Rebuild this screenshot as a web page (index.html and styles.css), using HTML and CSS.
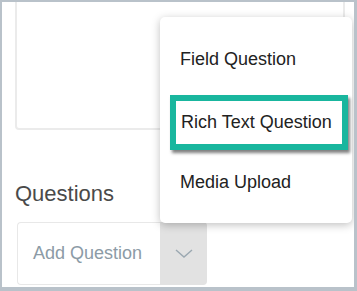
FILE: index.html
```html
<!DOCTYPE html>
<html lang="en">
<head>
    <meta charset="UTF-8">
    <title>Add Question</title>
    <link rel="stylesheet" href="styles.css">
</head>
<body>

    <div class="panel">
        <div class="text-area"></div>

        <h3 class="section-label">Questions</h3>

        <div class="add-group">
            <div class="add-input">Add Question</div>
            <div class="add-toggle">
                <svg width="18" height="10" viewBox="0 0 18 10">
                    <polyline points="1,1 9,8 17,1" fill="none" stroke="#9ba8b1" stroke-width="1.4"/>
                </svg>
            </div>
        </div>

        <ul class="menu">
            <li class="menu-item">Field Question</li>
            <li class="menu-item active">Rich Text Question</li>
            <li class="menu-item">Media Upload</li>
        </ul>
    </div>

</body>
</html>
```

FILE: styles.css
```css
* {
    margin: 0;
    padding: 0;
    box-sizing: border-box;
    font-family: 'Liberation Sans', Arial, sans-serif;
}
body {
    background: #b9c2ca;
    padding: 2px 3px 4px 2px;
}
.panel {
    position: relative;
    width: 352px;
    height: 285px;
    background: white;
    overflow: hidden;
    padding-left: 13px;
}
.text-area {
    width: 330px;
    height: 138px;
    margin-top: -10px;
    border: 2px solid #ebebeb;
    border-radius: 4px;
}
.section-label {
    font-size: 22px;
    font-weight: 400;
    line-height: 26px;
    color: #4a4a4a;
    margin-top: 50.5px;
}
.add-group {
    display: flex;
    height: 63px;
    margin-top: 15.5px;
    margin-left: 2px;
}
.add-input {
    width: 143px;
    display: flex;
    align-items: center;
    padding-left: 15px;
    font-size: 18px;
    color: #8c9ba6;
    border: 1px solid #e8e8e8;
    border-right: none;
    border-radius: 4px 0 0 4px;
}
.add-toggle {
    width: 47px;
    display: flex;
    align-items: center;
    justify-content: center;
    background: #e2e2e2;
    border-radius: 0 4px 4px 0;
}
.menu {
    position: absolute;
    left: 158px;
    top: 15px;
    width: 192px;
    height: 206px;
    list-style: none;
    background: white;
    border-radius: 5px;
    box-shadow: 0 2px 9px rgba(0, 0, 0, 0.25);
    padding: 12px 0 10px;
}
.menu-item {
    height: 61px;
    line-height: 61px;
    padding-left: 20px;
    font-size: 18px;
    color: #222;
}
.menu-item.active {
    height: 55px;
    line-height: 43px;
    margin: 5px 4px 2px 10px;
    padding-left: 5px;
    border: 6px solid #19b69e;
    box-shadow: 2px 3px 3px rgba(0, 0, 0, 0.5);
}
```
